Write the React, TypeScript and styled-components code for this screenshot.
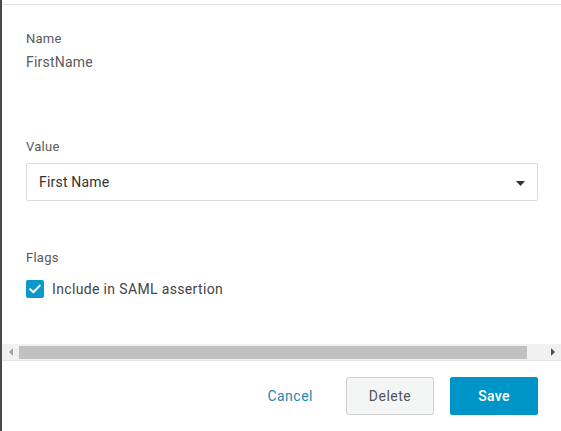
import styled, { createGlobalStyle } from "styled-components";

const GlobalStyle = createGlobalStyle`
  html, body {
    margin: 0;
    padding: 0;
    background: #ffffff;
  }
  body {
    font-family: Roboto, "Liberation Sans", sans-serif;
    color: #555555;
  }
`;

const Frame = styled.div`
  width: 561px;
  height: 431px;
  box-sizing: border-box;
  border-left: 2px solid #4a4a4a;
  display: flex;
  flex-direction: column;
  background: #ffffff;
  overflow: hidden;
`;

const TopEdge = styled.div`
  height: 4px;
  border-bottom: 1px solid #e2e2e2;
  flex-shrink: 0;
`;

const Body = styled.div`
  flex: 1;
  padding: 26px 23px 0 24px;
  display: flex;
  flex-direction: column;
`;

const Label = styled.div`
  font-size: 13px;
  line-height: 16px;
  color: #595959;
  letter-spacing: 0.25px;
`;

const StaticValue = styled.div`
  font-size: 14px;
  line-height: 20px;
  color: #595959;
  margin-top: 5px;
  letter-spacing: 0.2px;
`;

const Section = styled.div<{ $gap: number }>`
  margin-top: ${(p) => p.$gap}px;
  display: flex;
  flex-direction: column;
`;

const Select = styled.div`
  margin-top: 8px;
  height: 38px;
  box-sizing: border-box;
  border: 1px solid #dcdcdc;
  border-radius: 2px;
  display: flex;
  align-items: center;
  justify-content: space-between;
  padding: 0 12px 0 12px;
  font-size: 14px;
  color: #333333;
  letter-spacing: 0.2px;
`;

const Caret = styled.svg`
  width: 9px;
  height: 5px;
  margin-top: 2px;
`;

const CheckRow = styled.label`
  margin-top: 14px;
  display: flex;
  align-items: center;
  gap: 8px;
  font-size: 14px;
  color: #444444;
  letter-spacing: 0.35px;
`;

const CheckBox = styled.span`
  width: 18px;
  height: 18px;
  border-radius: 2px;
  background: #0b98cc;
  display: flex;
  align-items: center;
  justify-content: center;
`;

const ScrollBar = styled.div`
  height: 17px;
  flex-shrink: 0;
  background: #f1f1f1;
  display: flex;
  align-items: center;
  border-bottom: 1px solid #e4e4e4;
  box-sizing: border-box;
`;

const ScrollArrow = styled.div<{ $dir: "left" | "right"; $active?: boolean }>`
  width: 17px;
  height: 15px;
  display: flex;
  align-items: center;
  justify-content: center;
  &::before {
    content: "";
    border-top: 4px solid transparent;
    border-bottom: 4px solid transparent;
    ${(p) =>
      p.$dir === "left"
        ? `border-right: 4px solid ${p.$active ? "#505050" : "#a3a3a3"};`
        : `border-left: 4px solid ${p.$active ? "#505050" : "#a3a3a3"};`}
  }
`;

const ScrollTrack = styled.div`
  flex: 1;
  height: 13px;
  display: flex;
  align-items: center;
`;

const ScrollThumb = styled.div`
  height: 13px;
  background: #c1c1c1;
`;

const Footer = styled.div`
  flex-shrink: 0;
  padding: 16px 23px 16px 0;
  display: flex;
  justify-content: flex-end;
  align-items: center;
`;

const Button = styled.button<{ $variant: "link" | "secondary" | "primary" }>`
  height: 38px;
  box-sizing: border-box;
  font-family: Roboto, "Liberation Sans", sans-serif;
  font-size: 14px;
  letter-spacing: 0.5px;
  border-radius: 2px;
  cursor: pointer;
  ${(p) =>
    p.$variant === "link"
      ? `
    background: transparent;
    border: none;
    color: #2388b5;
    padding: 0 16px;
    margin-right: 17px;
  `
      : p.$variant === "secondary"
        ? `
    width: 88px;
    background: #f4f5f5;
    border: 1px solid #d2d2d2;
    color: #555555;
    margin-right: 16px;
  `
        : `
    width: 88px;
    background: #0095c8;
    border: 1px solid #0095c8;
    color: #ffffff;
    font-weight: 500;
    letter-spacing: 0.3px;
  `}
`;

export default function App() {
  return (
    <>
      <GlobalStyle />
      <Frame>
        <TopEdge />
        <Body>
          <Label>Name</Label>
          <StaticValue>FirstName</StaticValue>

          <Section $gap={67}>
            <Label>Value</Label>
            <Select>
              <span>First Name</span>
              <Caret viewBox="0 0 9 5">
                <path d="M0 0 H9 L4.5 5 Z" fill="#333333" />
              </Caret>
            </Select>
          </Section>

          <Section $gap={49}>
            <Label>Flags</Label>
            <CheckRow>
              <CheckBox>
                <svg width="12" height="10" viewBox="0 0 12 10">
                  <path
                    d="M1.2 5.2 L4.4 8.2 L10.8 1.6"
                    fill="none"
                    stroke="#ffffff"
                    strokeWidth="2"
                    strokeLinecap="round"
                    strokeLinejoin="round"
                  />
                </svg>
              </CheckBox>
              Include in SAML assertion
            </CheckRow>
          </Section>
        </Body>

        <ScrollBar>
          <ScrollArrow $dir="left" />
          <ScrollTrack>
            <ScrollThumb style={{ width: "508px" }} />
          </ScrollTrack>
          <ScrollArrow $dir="right" $active />
        </ScrollBar>

        <Footer>
          <Button $variant="link">Cancel</Button>
          <Button $variant="secondary">Delete</Button>
          <Button $variant="primary">Save</Button>
        </Footer>
      </Frame>
    </>
  );
}
